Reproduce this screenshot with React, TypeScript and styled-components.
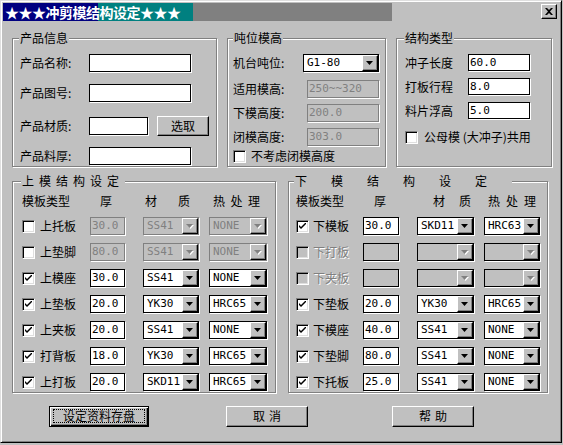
import { Fragment } from "react";
import styled, { createGlobalStyle } from "styled-components";

const GlobalStyle = createGlobalStyle`
  html, body { margin: 0; padding: 0; background: #c0c0c0; }
  body {
    font-family: "Noto Sans CJK SC", "DejaVu Sans", sans-serif;
    font-size: 12px;
    color: #000;
  }
  * { box-sizing: border-box; }
`;

const Window = styled.div`
  width: 562px;
  height: 443px;
  background: #c0c0c0;
  border: 1px solid;
  border-color: #dfdfdf #000 #000 #dfdfdf;
  box-shadow: inset 1px 1px 0 #fff, inset -1px -1px 0 #808080;
  display: flex;
  flex-direction: column;
`;

const TitleRow = styled.div`
  display: flex;
  align-items: flex-start;
  height: 20px;
  padding: 2px 2px 0 2px;
`;

const TitleStrip = styled.div`
  width: 389px;
  height: 18px;
  padding-left: 2px;
  background: linear-gradient(to right, #000080 0 95px, #008080 95px 190px, #808080 190px 100%);
  color: #fff;
  font-weight: 700;
  font-size: 14px;
  letter-spacing: -0.5px;
  line-height: 18px;
  white-space: nowrap;
`;

const CloseButton = styled.div`
  margin: 1px 2px 0 auto;
  width: 16px;
  height: 15px;
  background: #c0c0c0;
  border: 1px solid;
  border-color: #fff #000 #000 #fff;
  box-shadow: inset -1px -1px 0 #808080;
  display: flex;
  align-items: center;
  justify-content: center;
`;

const Section = styled.div<{ $mt: number; $pl: number; $gap: number }>`
  display: flex;
  margin-top: ${(p) => p.$mt}px;
  padding-left: ${(p) => p.$pl}px;
  column-gap: ${(p) => p.$gap}px;
`;

const Group = styled.div<{ $w: number; $h: number; $pt: number; $pl: number }>`
  position: relative;
  width: ${(p) => p.$w}px;
  height: ${(p) => p.$h}px;
  padding: ${(p) => p.$pt}px 0 0 ${(p) => p.$pl}px;
  border: 1px solid #808080;
  box-shadow: inset 1px 1px 0 #fff, 1px 1px 0 #fff;
  display: flex;
  flex-direction: column;
`;

const Legend = styled.span<{ $left: number; $ls?: number }>`
  position: absolute;
  top: -9px;
  left: ${(p) => p.$left}px;
  padding: 0 1px;
  background: #c0c0c0;
  line-height: 16px;
  letter-spacing: ${(p) => p.$ls ?? 0}px;
  white-space: nowrap;
`;

const FieldRow = styled.div<{ $mt?: number; $h?: number }>`
  display: flex;
  align-items: center;
  height: ${(p) => p.$h ?? 18}px;
  margin-top: ${(p) => p.$mt ?? 0}px;
`;

const Label = styled.span<{ $w: number }>`
  flex: none;
  width: ${(p) => p.$w}px;
  white-space: nowrap;
  line-height: 16px;
`;

const TextBox = styled.div<{ $w: number; $h?: number; $disabled?: boolean; $gray?: boolean }>`
  flex: none;
  width: ${(p) => p.$w}px;
  height: ${(p) => p.$h ?? 18}px;
  padding-left: 1px;
  border: 1px solid ${(p) => (p.$disabled ? "#808080" : "#000")};
  box-shadow: 1px 1px 0 #fff;
  background: ${(p) => (p.$disabled || p.$gray ? "#c0c0c0" : "#fff")};
  color: ${(p) => (p.$disabled ? "#808080" : "#000")};
  font-family: "DejaVu Sans Mono", "Liberation Mono", monospace;
  font-size: 11px;
  line-height: ${(p) => (p.$h ?? 18) - 2}px;
  white-space: nowrap;
  overflow: hidden;
`;

const ComboBox = styled.div<{ $w: number; $disabled?: boolean; $gray?: boolean }>`
  flex: none;
  display: flex;
  width: ${(p) => p.$w}px;
  height: 18px;
  border: 1px solid ${(p) => (p.$disabled ? "#808080" : "#000")};
  box-shadow: 1px 1px 0 #fff;
  background: ${(p) => (p.$disabled || p.$gray ? "#c0c0c0" : "#fff")};
  color: ${(p) => (p.$disabled ? "#808080" : "#000")};
`;

const ComboText = styled.span`
  flex: 1;
  padding-left: 3px;
  font-family: "DejaVu Sans Mono", "Liberation Mono", monospace;
  font-size: 11px;
  line-height: 16px;
  white-space: nowrap;
  overflow: hidden;
`;

const ComboArrow = styled.span`
  flex: none;
  width: 16px;
  height: 16px;
  background: #c0c0c0;
  border: 1px solid;
  border-color: #fff #000 #000 #fff;
  box-shadow: inset -1px -1px 0 #808080;
  display: flex;
  align-items: center;
  justify-content: center;
`;

const Box = styled.span<{ $disabled?: boolean }>`
  flex: none;
  width: 13px;
  height: 13px;
  background: ${(p) => (p.$disabled ? "#c0c0c0" : "#fff")};
  border: 1px solid;
  border-color: #808080 #fff #fff #808080;
  box-shadow: inset 1px 1px 0 #000, inset -1px -1px 0 #dfdfdf;
  display: flex;
  align-items: center;
  justify-content: center;
`;

const CheckLine = styled.label<{ $gap: number; $disabled?: boolean }>`
  display: flex;
  align-items: center;
  gap: ${(p) => p.$gap}px;
  white-space: nowrap;
  line-height: 16px;
  color: ${(p) => (p.$disabled ? "#808080" : "#000")};
  text-shadow: ${(p) => (p.$disabled ? "1px 1px 0 #fff" : "none")};
`;

const SmallButton = styled.div<{ $w: number; $ml: number }>`
  flex: none;
  width: ${(p) => p.$w}px;
  height: 20px;
  margin-left: ${(p) => p.$ml}px;
  border: 1px solid;
  border-color: #fff #000 #000 #fff;
  box-shadow: inset -1px -1px 0 #808080;
  display: flex;
  align-items: center;
  justify-content: center;
  line-height: 16px;
`;

const Table = styled.div<{ $cols: string; $pl: number }>`
  display: grid;
  grid-template-columns: ${(p) => p.$cols};
  grid-template-rows: 16px repeat(7, 18px);
  row-gap: 8px;
  padding: 11px 0 0 ${(p) => p.$pl}px;
  align-items: center;
`;

const HeadCell = styled.span<{ $pl: number; $ls?: number }>`
  padding-left: ${(p) => p.$pl}px;
  letter-spacing: ${(p) => p.$ls ?? 0}px;
  line-height: 16px;
  white-space: nowrap;
`;

const ButtonRow = styled.div`
  display: flex;
  margin-top: 13px;
  padding-left: 48px;
`;

const PushButton = styled.div<{ $w: number; $ml?: number; $default?: boolean; $ls?: number }>`
  width: ${(p) => p.$w}px;
  height: 21px;
  margin-left: ${(p) => p.$ml ?? 0}px;
  background: #c0c0c0;
  border: 1px solid;
  border-color: ${(p) => (p.$default ? "#000" : "#fff #000 #000 #fff")};
  box-shadow: ${(p) =>
    p.$default
      ? "inset 1px 1px 0 #fff, inset -1px -1px 0 #000, inset -2px -2px 0 #808080"
      : "inset -1px -1px 0 #808080"};
  display: flex;
  align-items: center;
  justify-content: center;
  padding: 2px 3px 3px 3px;
  line-height: 16px;
  letter-spacing: ${(p) => p.$ls ?? 0}px;
  text-indent: ${(p) => p.$ls ?? 0}px;
`;

const FocusRing = styled.span`
  flex: 1;
  height: 100%;
  border: 1px dotted #000;
  display: flex;
  align-items: center;
  justify-content: center;
`;

function Arrow({ disabled }: { disabled?: boolean }) {
  return (
    <svg width="8" height="5" viewBox="0 0 8 5">
      {disabled && <polygon points="1,1 8,1 4.5,5" fill="#fff" />}
      <polygon points="0,0 7,0 3.5,4" fill={disabled ? "#808080" : "#000"} />
    </svg>
  );
}

function Combo({ w, value, disabled, gray }: { w: number; value?: string; disabled?: boolean; gray?: boolean }) {
  return (
    <ComboBox $w={w} $disabled={disabled} $gray={gray}>
      <ComboText>{value}</ComboText>
      <ComboArrow>
        <Arrow disabled={disabled || gray} />
      </ComboArrow>
    </ComboBox>
  );
}

function Check({ checked, disabled }: { checked?: boolean; disabled?: boolean }) {
  return (
    <Box $disabled={disabled}>
      {checked && (
        <svg width="7" height="7" viewBox="0 0 7 7">
          <path d="M0 2 L0 4 L2 6 L7 1 L7 -1 L2 4 Z" fill="#000" />
        </svg>
      )}
    </Box>
  );
}

type Row = { name: string; on: boolean; thick: string; mat: string; heat: string; off?: boolean };

const upperRows: Row[] = [
  { name: "上托板", on: false, thick: "30.0", mat: "SS41", heat: "NONE", off: true },
  { name: "上垫脚", on: false, thick: "80.0", mat: "SS41", heat: "NONE", off: true },
  { name: "上模座", on: true, thick: "30.0", mat: "SS41", heat: "NONE" },
  { name: "上垫板", on: true, thick: "20.0", mat: "YK30", heat: "HRC65" },
  { name: "上夹板", on: true, thick: "20.0", mat: "SS41", heat: "NONE" },
  { name: "打背板", on: true, thick: "18.0", mat: "YK30", heat: "HRC65" },
  { name: "上打板", on: true, thick: "20.0", mat: "SKD11", heat: "HRC65" },
];

const lowerRows: Row[] = [
  { name: "下模板", on: true, thick: "30.0", mat: "SKD11", heat: "HRC63" },
  { name: "下打板", on: false, thick: "", mat: "", heat: "", off: true },
  { name: "下夹板", on: false, thick: "", mat: "", heat: "", off: true },
  { name: "下垫板", on: true, thick: "20.0", mat: "YK30", heat: "HRC65" },
  { name: "下模座", on: true, thick: "40.0", mat: "SS41", heat: "NONE" },
  { name: "下垫脚", on: true, thick: "80.0", mat: "SS41", heat: "NONE" },
  { name: "下托板", on: true, thick: "25.0", mat: "SS41", heat: "NONE" },
];

export default function App() {
  return (
    <>
      <GlobalStyle />
      <Window>
        <TitleRow>
          <TitleStrip>★★★冲剪模结构设定★★★</TitleStrip>
          <CloseButton>
            <svg width="8" height="7" viewBox="0 0 8 7">
              <path d="M0 0 H2 L4 2 L6 0 H8 L5 3.5 L8 7 H6 L4 5 L2 7 H0 L3 3.5 Z" fill="#000" />
            </svg>
          </CloseButton>
        </TitleRow>

        <Section $mt={17} $pl={11} $gap={10}>
          <Group $w={205} $h={129} $pt={15} $pl={7}>
            <Legend $left={6}>产品信息</Legend>
            <FieldRow>
              <Label $w={69}>产品名称:</Label>
              <TextBox $w={102} />
            </FieldRow>
            <FieldRow $mt={12}>
              <Label $w={69}>产品图号:</Label>
              <TextBox $w={102} />
            </FieldRow>
            <FieldRow $mt={13} $h={21}>
              <Label $w={69}>产品材质:</Label>
              <TextBox $w={59} />
              <SmallButton $w={52} $ml={9}>选取</SmallButton>
            </FieldRow>
            <FieldRow $mt={11}>
              <Label $w={69}>产品料厚:</Label>
              <TextBox $w={102} />
            </FieldRow>
          </Group>

          <Group $w={159} $h={129} $pt={15} $pl={5}>
            <Legend $left={5}>吨位模高</Legend>
            <FieldRow>
              <Label $w={70}>机台吨位:</Label>
              <Combo w={76} value="G1-80" />
            </FieldRow>
            <FieldRow $mt={8}>
              <Label $w={74}>适用模高:</Label>
              <TextBox $w={72} $disabled>250~~320</TextBox>
            </FieldRow>
            <FieldRow $mt={6}>
              <Label $w={74}>下模高度:</Label>
              <TextBox $w={72} $disabled>200.0</TextBox>
            </FieldRow>
            <FieldRow $mt={6}>
              <Label $w={74}>闭模高度:</Label>
              <TextBox $w={72} $disabled>303.0</TextBox>
            </FieldRow>
            <FieldRow $mt={3} $h={14}>
              <CheckLine $gap={5}>
                <Check />
                不考虑闭模高度
              </CheckLine>
            </FieldRow>
          </Group>

          <Group $w={156} $h={129} $pt={15} $pl={8}>
            <Legend $left={7}>结构类型</Legend>
            <FieldRow $h={17}>
              <Label $w={63}>冲子长度</Label>
              <TextBox $w={62} $h={17}>60.0</TextBox>
            </FieldRow>
            <FieldRow $mt={7} $h={17}>
              <Label $w={63}>打板行程</Label>
              <TextBox $w={62} $h={17}>8.0</TextBox>
            </FieldRow>
            <FieldRow $mt={7} $h={17}>
              <Label $w={63}>料片浮高</Label>
              <TextBox $w={62} $h={17}>5.0</TextBox>
            </FieldRow>
            <FieldRow $mt={11} $h={14}>
              <CheckLine $gap={6}>
                <Check />
                公母模 (大冲子)共用
              </CheckLine>
            </FieldRow>
          </Group>
        </Section>

        <Section $mt={14} $pl={11} $gap={12}>
          <Group $w={264} $h={212} $pt={0} $pl={0}>
            <Legend $left={8} $ls={5}>上模结构设定</Legend>
            <Table $cols="68px 53px 66px 58px" $pl={9}>
              <HeadCell $pl={0}>模板类型</HeadCell>
              <HeadCell $pl={10}>厚</HeadCell>
              <HeadCell $pl={2} $ls={21}>材质</HeadCell>
              <HeadCell $pl={4} $ls={5.5}>热处理</HeadCell>
              {upperRows.map((r) => (
                <Fragment key={r.name}>
                  <CheckLine $gap={5}>
                    <Check checked={r.on} />
                    {r.name}
                  </CheckLine>
                  <TextBox $w={35} $disabled={r.off}>{r.thick}</TextBox>
                  <Combo w={56} value={r.mat} disabled={r.off} />
                  <Combo w={58} value={r.heat} disabled={r.off} />
                </Fragment>
              ))}
            </Table>
          </Group>

          <Group $w={260} $h={212} $pt={0} $pl={0}>
            <Legend $left={5} $ls={24}>下模结构设定</Legend>
            <Table $cols="67px 54px 67px 56px" $pl={7}>
              <HeadCell $pl={0}>模板类型</HeadCell>
              <HeadCell $pl={11}>厚</HeadCell>
              <HeadCell $pl={16} $ls={14}>材质</HeadCell>
              <HeadCell $pl={4} $ls={6}>热处理</HeadCell>
              {lowerRows.map((r) => (
                <Fragment key={r.name}>
                  <CheckLine $gap={4} $disabled={r.off}>
                    <Check checked={r.on} disabled={r.off} />
                    {r.name}
                  </CheckLine>
                  <TextBox $w={36} $gray={r.off}>{r.thick}</TextBox>
                  <Combo w={57} value={r.mat} gray={r.off} />
                  <Combo w={56} value={r.heat} gray={r.off} />
                </Fragment>
              ))}
            </Table>
          </Group>
        </Section>

        <ButtonRow>
          <PushButton $w={100} $default>
            <FocusRing>设定资料存盘</FocusRing>
          </PushButton>
          <PushButton $w={82} $ml={77} $ls={4}>取消</PushButton>
          <PushButton $w={82} $ml={84} $ls={4}>帮助</PushButton>
        </ButtonRow>
      </Window>
    </>
  );
}
